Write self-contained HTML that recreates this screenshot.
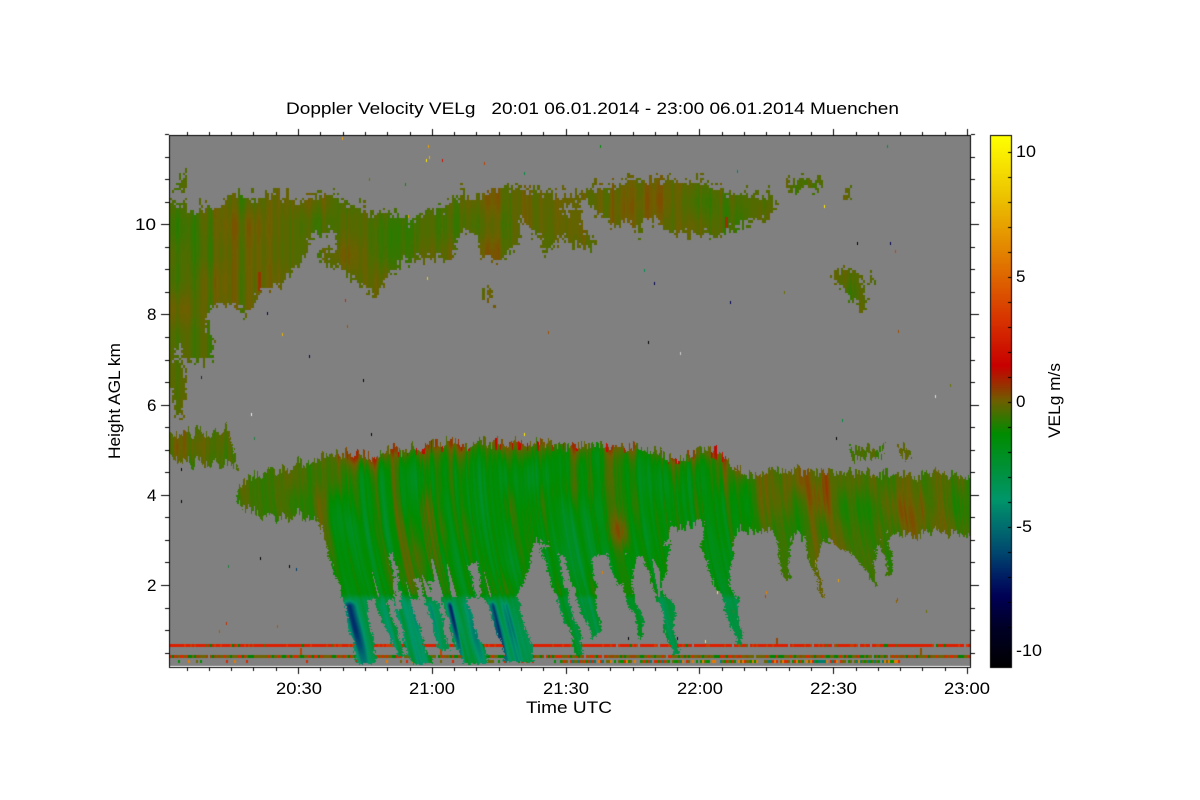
<!DOCTYPE html>
<html><head><meta charset="utf-8"><title>Doppler Velocity VELg</title>
<style>
html,body{margin:0;padding:0;background:#fff;width:1200px;height:800px;overflow:hidden}
#c{position:absolute;left:0;top:0}
svg{position:absolute;left:0;top:0}
text{font-family:"Liberation Sans",sans-serif;font-size:17px;fill:#000}
</style></head><body>
<canvas id="c" width="1200" height="800"></canvas>
<svg width="1200" height="800" viewBox="0 0 1200 800">
<text x="286" y="114" textLength="613" lengthAdjust="spacingAndGlyphs" xml:space="preserve">Doppler Velocity VELg   20:01 06.01.2014 - 23:00 06.01.2014 Muenchen</text>
<text x="276" y="694" textLength="46" lengthAdjust="spacingAndGlyphs">20:30</text>
<text x="409" y="694" textLength="46" lengthAdjust="spacingAndGlyphs">21:00</text>
<text x="543" y="694" textLength="46" lengthAdjust="spacingAndGlyphs">21:30</text>
<text x="677" y="694" textLength="46" lengthAdjust="spacingAndGlyphs">22:00</text>
<text x="810" y="694" textLength="47" lengthAdjust="spacingAndGlyphs">22:30</text>
<text x="944" y="694" textLength="46" lengthAdjust="spacingAndGlyphs">23:00</text>
<text x="526" y="713" textLength="86" lengthAdjust="spacingAndGlyphs">Time UTC</text>
<text x="135" y="230" textLength="21" lengthAdjust="spacingAndGlyphs">10</text>
<text x="147" y="320">8</text>
<text x="147" y="411">6</text>
<text x="147" y="501">4</text>
<text x="147" y="591">2</text>
<text transform="translate(120 459) rotate(-90)" textLength="116" lengthAdjust="spacingAndGlyphs">Height AGL km</text>
<text transform="translate(1060 438) rotate(-90)" textLength="75" lengthAdjust="spacingAndGlyphs">VELg m/s</text>
<text x="1016" y="157" textLength="20" lengthAdjust="spacingAndGlyphs">10</text>
<text x="1016" y="282">5</text>
<text x="1016" y="407">0</text>
<text x="1016" y="532" textLength="16" lengthAdjust="spacingAndGlyphs" xml:space="preserve">-5</text>
<text x="1016" y="656" textLength="26" lengthAdjust="spacingAndGlyphs" xml:space="preserve">-10</text>
</svg>
<script>
(function(){
var cv=document.getElementById('c'),ctx=cv.getContext('2d');
ctx.fillStyle='#fff';ctx.fillRect(0,0,1200,800);
function fr(t){return t-Math.floor(t)}
function hash(i){return fr(Math.sin(i*127.1+311.7)*43758.5453)}
function h2(a,b){return fr(Math.sin(a*12.9898+b*78.233)*43758.5453)}
function ss(t){return t*t*(3-2*t)}
function n1(t){var i=Math.floor(t),f=ss(t-i);return (hash(i)*(1-f)+hash(i+1)*f)*2-1}
function n2(x,y){var i=Math.floor(x),j=Math.floor(y),a=ss(x-i),b=ss(y-j);
 var p=h2(i,j)*(1-a)+h2(i+1,j)*a,q=h2(i,j+1)*(1-a)+h2(i+1,j+1)*a;return (p*(1-b)+q*b)*2-1}
function sm(a,b,x){var t=(x-a)/(b-a);t=t<0?0:t>1?1:t;return ss(t)}
/* colormap by colourbar y */
var stops=[[135,255,255,0],[200,235,190,0],[260,225,120,0],[320,215,50,0],[365,200,0,0],[385,150,50,0],[400,110,95,0],[433,0,140,0],[470,0,145,60],[498,0,150,105],[525,0,110,110],[552,0,70,110],[575,0,30,100],[595,0,0,85],[625,0,0,40],[667,0,0,0]];
function cmY(y){for(var i=1;i<stops.length;i++){if(y<=stops[i][0]){var a=stops[i-1],b=stops[i],t=(y-a[0])/(b[0]-a[0]);
 return [a[1]+(b[1]-a[1])*t,a[2]+(b[2]-a[2])*t,a[3]+(b[3]-a[3])*t]}}return [0,0,0]}
function cmV(v){var y=401.7-v*25;y=y<135?135:y>667?667:y;y=Math.floor(y/2)*2;return cmY(y)}
/* masks */
var mc=document.createElement('canvas');mc.width=1200;mc.height=800;var m=mc.getContext('2d');
m.fillStyle='#000';m.fillRect(0,0,1200,800);
function poly(p,col){m.fillStyle=col;m.beginPath();m.moveTo(p[0][0],p[0][1]);for(var i=1;i<p.length;i++)m.lineTo(p[i][0],p[i][1]);m.closePath();m.fill()}
var U='#f00',L='#0f0',G='#000';
poly([[165,197],[175,200],[182,208],[200,209],[215,208],[225,196],[240,194],[255,198],[270,193],[300,202],[320,192],[345,200],[370,214],[385,210],[410,222],[425,210],[445,207],[455,195],[475,198],[495,190],[520,188],[535,192],[560,196],[593,190],[620,183],[656,178],[676,180],[710,183],[727,192],[763,196],[778,205],[778,208],[763,220],[740,223],[720,235],[673,233],[655,220],[643,218],[638,236],[628,222],[610,225],[593,207],[580,200],[560,205],[560,237],[548,252],[541,250],[540,232],[530,232],[520,212],[518,243],[500,258],[482,257],[475,235],[460,230],[450,258],[420,258],[400,262],[385,278],[375,295],[355,280],[340,265],[320,262],[318,248],[336,247],[335,232],[312,233],[305,253],[290,272],[275,287],[262,287],[245,313],[230,305],[213,300],[205,320],[213,345],[213,358],[185,360],[180,345],[165,345]],U);
poly([[560,210],[580,208],[582,232],[593,240],[593,248],[577,248],[565,236],[560,232]],U);
poly([[165,335],[175,335],[175,355],[185,370],[184,400],[178,423],[176,415],[170,385],[165,385]],U);
poly([[176,180],[188,178],[188,186],[182,190],[176,186]],U);
poly([[830,272],[845,266],[855,272],[862,285],[866,300],[866,313],[862,313],[852,300],[840,285],[830,276]],U);
poly([[870,275],[875,278],[872,288],[868,285]],U);
poly([[481,288],[490,286],[493,302],[488,300]],U);
poly([[780,182],[820,176],[822,186],[790,194]],U);
poly([[842,184],[847,186],[848,200],[844,198]],U);
poly([[165,432],[193,431],[215,432],[226,427],[230,440],[239,467],[215,462],[190,462],[165,452]],L);
poly([[850,448],[885,447],[885,452],[865,458],[850,458]],L);
poly([[896,446],[904,444],[912,455],[906,458]],L);
var topPts=[[237,485],[245,482],[260,473],[283,468],[310,460],[340,453],[373,458],[390,450],[437,445],[493,442],[560,444],[600,444],[653,448],[670,458],[710,450],[730,458],[742,475],[767,470],[975,475]];
var main=topPts.concat([[975,533],[893,533],[880,540],[850,553],[833,543],[803,537],[777,538],[767,527],[735,533],[705,525],[672,525],[665,545],[645,556],[620,552],[600,555],[585,560],[560,555],[545,545],[533,543],[527,577],[518,597],[343,600],[327,547],[317,517],[293,515],[270,517],[243,508],[237,497]]);
poly(main,L);
[
[[343,597],[366,597],[378,664],[358,664]],
[[372,597],[386,597],[406,657],[400,657]],
[[390,590],[408,590],[432,664],[412,664]],
[[425,597],[438,597],[450,650],[440,650]],
[[442,597],[467,597],[488,664],[462,664]],
[[483,590],[493,590],[514,660],[508,660]],
[[490,597],[518,597],[535,662],[505,662]],
[[540,548],[556,548],[585,655],[577,655]],
[[562,548],[592,548],[600,630],[592,640],[578,600]],
[[606,550],[625,550],[622,585],[618,585]],
[[625,555],[640,548],[632,580],[645,635],[641,640],[622,580]],
[[640,545],[672,545],[662,590],[672,600],[678,655],[672,655],[658,600]],
[[702,545],[705,525],[735,530],[730,590],[738,600],[742,645],[738,645],[722,600],[708,565]],
[[776,537],[791,537],[790,578],[784,580]],
[[805,537],[825,537],[816,570],[826,598],[823,598],[812,570]],
[[850,548],[882,540],[872,565],[878,587],[876,585],[860,565]],
[[880,538],[890,538],[892,577],[888,577]]
].forEach(function(p){poly(p,L)});
poly([[390,553],[394,553],[402,610],[396,610]],G);
poly([[415,578],[420,578],[424,600],[419,600]],G);
poly([[428,582],[436,582],[442,601],[433,601]],G);
poly([[468,565],[478,562],[482,597],[477,597]],G);
var md=m.getImageData(0,0,1200,800).data;
function mk(x,y,ch){if(x<0||x>1199||y<0||y>799)return false;return md[(y*1200+x)*4+ch]>127}
function topAt(x){for(var i=1;i<topPts.length;i++){if(x<=topPts[i][0]){var a=topPts[i-1],b=topPts[i];return a[1]+(b[1]-a[1])*(x-a[0])/(b[0]-a[0])}}return 475}
function gs(x,y,cx,cy,sx,sy){var a=(x-cx)/sx,b=(y-cy)/sy;return Math.exp(-(a*a+b*b))}
function disp(y){if(y<450)return 0;if(y<590)return .001*(y-450)*(y-450);return 19.6+.26*(y-590)}
var cores=[[350,612,.24,4,3.6],[451,612,.22,3,4.2],[494,612,.24,3,3.6],[398,615,.24,3,1.6],[415,620,.24,4,1],[470,620,.24,5,1],[510,625,.24,4,1.5],[361,635,.24,3,1.4],[384,620,.3,3,.8],[432,615,.25,3,1.2]];
var up=[[390,240,40,40,-.35],[345,255,20,20,.25],[255,260,30,40,.12],[186,240,25,40,-.25],[595,205,18,25,-.3],[705,212,30,25,-.3],[850,292,10,15,-.3],[620,205,25,25,.25],[660,200,12,20,.2]];
var lowB=[[415,555,22,40,1.1],[398,575,10,20,.7],[620,530,12,18,1.2],[528,540,10,30,.8],[445,490,10,25,.5],[395,510,10,25,.55],[605,505,25,30,.3],[560,490,25,15,.35],[760,500,12,30,.45],[820,500,12,35,.55],[905,500,14,30,.4],[710,480,20,20,.3],[345,480,20,25,.5],[426,520,8,50,.5],[505,510,8,40,.45],[322,525,6,30,.8]];
var W=1200,im=ctx.getImageData(0,0,W,800),d=im.data;
for(var x=170;x<970;x++){
 var col=Math.floor(x/1.5),hc=hash(col*3.1),hd=hash(col*7.7+2);
 var cu=Math.floor(x/2.2),Xu=Math.round(cu*2.2),hu=hash(cu*3.1);
 for(var y=136;y<666;y++){
  var ru=Math.floor(y/2.5),Yu=Math.round(ru*2.5);
  var jy=Math.round((hu-.5)*7+(h2(cu,ru)-.5)*9);
  var jx=Math.round((h2(ru,cu+7)-.5)*6);
  var isU=mk(Xu+jx,Yu+jy,0)||(Yu<240&&hash(cu*9.9)>.75&&h2(cu+3,ru)>.55&&mk(Xu,Yu+Math.round(hash(cu*4.4)*14),0));
  var rl=Math.floor(y/1.5);
  var jyL=y<542?Math.round((hd-.5)*10+n1(x/5.5)*4):Math.round((hc-.5)*3);
  var jxL=Math.round((h2(rl,col)-.5)*3+(y>540?n1(y/9+x/40)*1.6:0));
  var isL=mk(x+jxL,y+jyL,1);
  var r=128,g=128,b=128,c=null;
  if(isL&&y>558&&y<597&&x>343&&x<660){
    var us=x-disp(y),th=.85-.3*(y-558)/39;
    if(n1(us/3.5+11)>th)isL=false;
  }
  if(isU){
   var st=.55*n1(cu/1.3+.3)+.45*n1(x/6)+.3*n1(x/17+5);
   var v=-.2+.22*n2(x/35,Yu/28)+st*.36;
   for(var i=0;i<up.length;i++)v+=up[i][4]*gs(x,Yu,up[i][0],up[i][1],up[i][2],up[i][3]);
   if(x>=258&&x<=260&&y>=272&&y<=290)v=.6;
   if(x>=725&&x<=727&&y>=217&&y<=227)v=.7;
   c=cmV(v);
  }else if(isL){
   var tp=topAt(x),dp=Math.max(0,y-tp);
   var gg=sm(310,345,x)*(1-.8*sm(735,775,x));
   var u=x-disp(y);
   var st=.5*n1(u/1.7)+.45*n1(u/4.5)+.45*n1(u/12+3);
   var v=-.3-1.15*gg+st*(.4+.5*gg)+.35*n2(u/30,y/40)+.3*n2(u/8+40,y/28);
   var tn=dp+n1(x/7+2)*4;
   v+=gg*gg*1.6*Math.exp(-Math.max(0,tn)/12);
   if(dp<7&&hash(col*1.7)>.84&&x>385&&x<730)v+=1.4;
   var tf=x<560?1:x<745?.75:0;
   v-=1.5*tf*sm(592,600,y);
   for(var i=0;i<cores.length;i++){var q=cores[i];var dx=(x-(q[0]+q[2]*(y-q[1])))/q[3];
    v-=q[4]*Math.exp(-dx*dx)*sm(598,606,y)*(1-.45*sm(625,665,y))}
   for(var i=0;i<lowB.length;i++){var q=lowB[i];v+=q[4]*gs(u,y,q[0]-disp(q[1]),q[1],q[2],q[3])}
   c=cmV(v);
  }else{
   var ce=Math.floor(x/2),hb=h2(ce,y>=660?3:y>=655?2:1);
   if(y>=644&&y<647){
    if(x>580&&hb>.94){}
    else c=hb<.72?[220,30,0]:hb<.86?[200,60,0]:hb<.9?[110,95,0]:hb<.93?[0,130,0]:[225,50,0];
   }else if(y>=655&&y<658){
    c=hb<.42?[110,100,0]:hb<.65?[0,130,0]:hb<.85?[215,40,0]:hb<.97?[150,70,0]:null;
   }else if(y>=660&&y<663){
    var p=x<560?.14:x<900?.85:.05;
    if(hb<p){var k=Math.floor(h2(ce,9)*5);c=[[0,125,110],[230,120,0],[215,40,0],[0,140,0],[110,100,0]][k]}
   }else if(y>=648&&y<655){
    if(h2(ce,5)>.99)c=x>680?[140,80,0]:[190,70,0];
   }else if(y>=638&&y<644&&x>680&&x<900){
    if(h2(ce,6)>.985)c=[150,70,0];
   }
  }
  if(c){r=c[0];g=c[1];b=c[2]}
  var o=(y*W+x)*4;d[o]=r;d[o+1]=g;d[o+2]=b;d[o+3]=255;
 }
}
ctx.putImageData(im,0,0);
/* speckles */
[[342,137,'#e8a000'],[428,145,'#e8a000'],[429,156,'#e0b000'],[426,159,'#ffe800'],[442,159,'#d01000'],[484,162,'#c04000'],[524,172,'#008c40'],[405,183,'#008c00'],[369,178,'#6a7000'],[267,312,'#000050'],[282,333,'#e8b000'],[309,355,'#000050'],[345,299,'#d02000'],[347,325,'#a05000'],[548,331,'#a05000'],[408,215,'#e8a000'],[427,277,'#f0d000'],[600,145,'#008c00'],[887,145,'#008c40'],[737,170,'#008070'],[824,205,'#ffe800'],[857,242,'#000'],[890,242,'#000050'],[895,250,'#d04000'],[644,269,'#009050'],[654,282,'#000050'],[730,301,'#000050'],[784,291,'#6a7000'],[201,376,'#202040'],[363,379,'#000'],[251,413,'#eee'],[254,437,'#208040'],[371,433,'#000'],[181,500,'#000'],[228,565,'#208040'],[260,557,'#000'],[289,565,'#000'],[296,568,'#004070'],[226,622,'#c03000'],[219,630,'#a06000'],[277,625,'#a06000'],[524,433,'#ffe800'],[898,330,'#a05000'],[648,341,'#000'],[680,352,'#ccc'],[842,419,'#008c40'],[836,437,'#000'],[950,384,'#6a7000'],[935,395,'#ddd'],[705,640,'#ffe040'],[677,637,'#000050'],[628,637,'#000'],[815,560,'#e08000'],[897,598,'#a05000'],[602,571,'#e08000'],[717,591,'#ffe040'],[766,591,'#e08000'],[765,595,'#c04000'],[838,579,'#e8a000'],[896,600,'#8a6000'],[926,610,'#6a7000'],[733,610,'#a05000'],[181,468,'#000']].forEach(function(s){ctx.fillStyle=s[2];ctx.fillRect(s[0],s[1],1,3)});
/* axes */
ctx.fillStyle='#000';
ctx.fillRect(169,135,802,1);ctx.fillRect(169,667,802,1);ctx.fillRect(169,135,1,533);ctx.fillRect(970,135,1,533);
for(var i=-5;i<=30;i++){var tx=Math.round(298+i*22.3);if(tx<169||tx>970)continue;var mj=((i%6)+6)%6==0;var l=mj?6:3;
 ctx.fillRect(tx,135-l,1,l);ctx.fillRect(tx,668,1,l);}
for(var i=0;i<=23;i++){var ty=Math.round(134+i*22.55);if(ty>666)continue;var mj=i%4==0&&i>0;var l=mj?8:4;
 ctx.fillRect(169-l,ty,l,1);ctx.fillRect(971,ty,l,1);}
/* colourbar */
for(var y=136;y<667;y+=2){var c=cmY(y);ctx.fillStyle='rgb('+Math.round(c[0])+','+Math.round(c[1])+','+Math.round(c[2])+')';ctx.fillRect(991,y,20,2)}
ctx.fillStyle='#000';
ctx.fillRect(990,135,22,1);ctx.fillRect(990,667,22,1);ctx.fillRect(990,135,1,533);ctx.fillRect(1011,135,1,533);
for(var i=-10;i<=10;i++){var ty=Math.round(401.7-i*25);ctx.fillRect(1008,ty,3,1)}
})();
</script>
</body></html>
